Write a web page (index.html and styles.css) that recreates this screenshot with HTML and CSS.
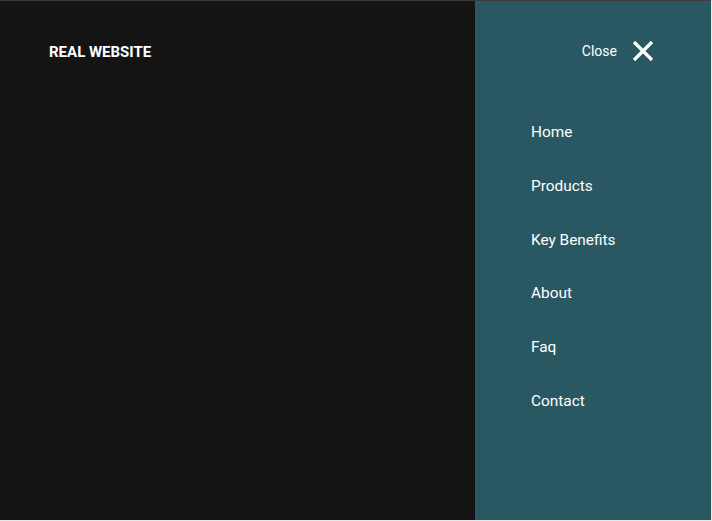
FILE: index.html
```html
<!DOCTYPE html>
<html>
<head>
<meta charset="utf-8">
<link rel="stylesheet" href="styles.css">
</head>
<body>
<div class="page">
  <header class="main">
    <div class="logo">REAL WEBSITE</div>
  </header>
  <aside class="panel">
    <div class="close-row">
      <span class="close-label">Close</span>
      <svg class="close-icon" width="22" height="22" viewBox="0 0 22 22"><path d="M2 2 L20 20 M20 2 L2 20" stroke="#fff" stroke-width="3.2" fill="none"/></svg>
    </div>
    <nav class="menu">
      <a>Home</a>
      <a>Products</a>
      <a>Key Benefits</a>
      <a>About</a>
      <a>Faq</a>
      <a>Contact</a>
    </nav>
  </aside>
</div>
</body>
</html>
```
FILE: styles.css
```css
html, body { margin: 0; padding: 0; background: #e8e8e8; }
body { font-family: Roboto, "Liberation Sans", sans-serif; color: #fff; }
.page {
  width: 711px; height: 519px;
  border-top: 1px solid #3c3c3c;
  display: flex;
  background: #141414;
}
.main { flex: 1; padding: 42px 0 0 49px; }
.logo { font-weight: 700; font-size: 15px; line-height: 18px; letter-spacing: 0; }
.panel {
  width: 236px; background: #295862;
  display: flex; flex-direction: column;
}
.close-row {
  display: flex; align-items: center; justify-content: flex-end;
  padding: 39px 57px 0 0; gap: 15px; height: 22px;
}
.close-label { font-size: 14px; line-height: 16px; }
.close-icon { display: block; }
.menu { display: flex; flex-direction: column; padding: 61px 0 0 56px; gap: 35.8px; }
.menu a { font-size: 15.4px; line-height: 18px; color: #fff; font-weight: 400; }
```
